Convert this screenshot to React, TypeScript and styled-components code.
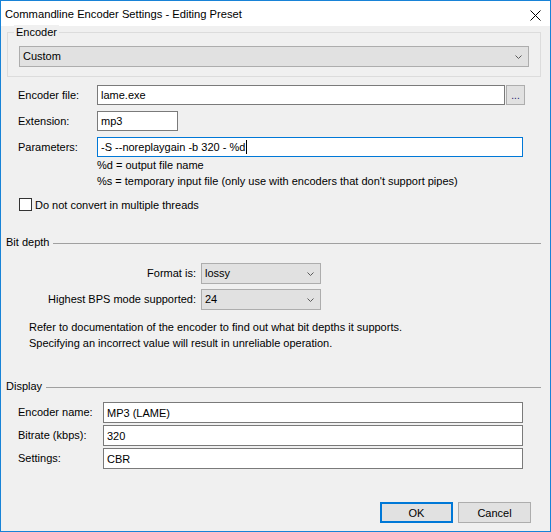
import styled, { createGlobalStyle } from 'styled-components';

const GlobalStyle = createGlobalStyle`
  html, body {
    margin: 0;
    padding: 0;
    background: #ffffff;
  }
  body {
    font-family: 'Liberation Sans', Arial, sans-serif;
    font-size: 11px;
    color: #000000;
  }
  * {
    box-sizing: border-box;
  }
`;

function Chevron() {
  return (
    <svg width='7' height='4' viewBox='0 0 7 4'>
      <polyline points='0.5,0.5 3.5,3.5 6.5,0.5' fill='none' stroke='#5a5a5a' strokeWidth='1' />
    </svg>
  );
}

function CloseGlyph() {
  return (
    <svg width='11' height='11' viewBox='0 0 11 11'>
      <line x1='0.5' y1='0.5' x2='10.5' y2='10.5' stroke='#000' strokeWidth='1' />
      <line x1='10.5' y1='0.5' x2='0.5' y2='10.5' stroke='#000' strokeWidth='1' />
    </svg>
  );
}

export default function App() {
  return (
    <>
      <GlobalStyle />
      <Window>
        <TitleBar>
          <Title>Commandline Encoder Settings - Editing Preset</Title>
          <CloseButton>
            <CloseGlyph />
          </CloseButton>
        </TitleBar>
        <Body>
          <GroupBox>
            <GroupLabel>Encoder</GroupLabel>
            <Select $width={510}>
              <span>Custom</span>
              <Chevron />
            </Select>
          </GroupBox>

          <FileGrid>
            <FieldLabel>Encoder file:</FieldLabel>
            <FieldRow>
              <TextBox $width={408}>lame.exe</TextBox>
              <BrowseButton>...</BrowseButton>
            </FieldRow>
            <FieldLabel>Extension:</FieldLabel>
            <TextBox $width={81}>mp3</TextBox>
            <FieldLabel>Parameters:</FieldLabel>
            <TextBox $width={426} $focused>
              -S --noreplaygain -b 320 - %d
              <Caret />
            </TextBox>
          </FileGrid>

          <Hint>
            <div>%d = output file name</div>
            <div>%s = temporary input file (only use with encoders that don't support pipes)</div>
          </Hint>

          <CheckRow>
            <CheckBox />
            <span>Do not convert in multiple threads</span>
          </CheckRow>

          <SectionHeader $top={24}>
            <span>Bit depth</span>
            <SectionRule />
          </SectionHeader>

          <DepthGrid>
            <DepthLabel>Format is:</DepthLabel>
            <Select $width={120}>
              <span>lossy</span>
              <Chevron />
            </Select>
            <DepthLabel>Highest BPS mode supported:</DepthLabel>
            <Select $width={120}>
              <span>24</span>
              <Chevron />
            </Select>
          </DepthGrid>

          <Note>
            <div>Refer to documentation of the encoder to find out what bit depths it supports.</div>
            <div>Specifying an incorrect value will result in unreliable operation.</div>
          </Note>

          <SectionHeader $top={28}>
            <span>Display</span>
            <SectionRule />
          </SectionHeader>

          <DisplayGrid>
            <FieldLabel>Encoder name:</FieldLabel>
            <TextBox $width={420} $height={21}>MP3 (LAME)</TextBox>
            <FieldLabel>Bitrate (kbps):</FieldLabel>
            <TextBox $width={420} $height={21}>320</TextBox>
            <FieldLabel>Settings:</FieldLabel>
            <TextBox $width={420} $height={21}>CBR</TextBox>
          </DisplayGrid>

          <ButtonBar>
            <DialogButton $primary>OK</DialogButton>
            <DialogButton>Cancel</DialogButton>
          </ButtonBar>
        </Body>
      </Window>
    </>
  );
}

const Window = styled.div`
  display: flex;
  flex-direction: column;
  width: 551px;
  height: 532px;
  border: 1px solid #1883d7;
  background-color: #f0f0f0;
  overflow: hidden;
`;

const TitleBar = styled.div`
  display: flex;
  align-items: center;
  height: 25px;
  padding-left: 4px;
  background-color: #ffffff;
`;

const Title = styled.div`
  flex: 1;
  font-size: 11.2px;
  line-height: 25px;
  padding-top: 1px;
`;

const CloseButton = styled.div`
  display: flex;
  align-items: center;
  margin-right: 9px;
  margin-top: 4px;
`;

const Body = styled.div`
  display: flex;
  flex-direction: column;
  flex: 1;
`;

const GroupBox = styled.div`
  position: relative;
  margin: 6px 9px 0 6px;
  padding: 13px 11px 9px 11px;
  border: 1px solid #dcdcdc;
`;

const GroupLabel = styled.span`
  position: absolute;
  top: -8px;
  left: 6px;
  padding: 0 2px;
  line-height: 15px;
  background-color: #f0f0f0;
`;

const Select = styled.div<{ $width: number }>`
  display: flex;
  align-items: center;
  justify-content: space-between;
  width: ${(p) => p.$width}px;
  height: 21px;
  padding: 0 6px 0 3px;
  border: 1px solid #adadad;
  background-color: #e1e1e1;
  line-height: 19px;
`;

const FileGrid = styled.div`
  display: grid;
  grid-template-columns: 79px 1fr;
  row-gap: 6px;
  align-items: center;
  margin-top: 8px;
  padding-left: 17px;
`;

const FieldLabel = styled.div`
  line-height: 15px;
`;

const FieldRow = styled.div`
  display: flex;
  gap: 1px;
`;

const TextBox = styled.div<{ $width: number; $height?: number; $focused?: boolean }>`
  display: flex;
  align-items: center;
  width: ${(p) => p.$width}px;
  height: ${(p) => p.$height ?? 20}px;
  padding: 0 3px;
  border: 1px solid ${(p) => (p.$focused ? '#0078d7' : '#7a7a7a')};
  background-color: #ffffff;
  white-space: pre;
`;

const Caret = styled.span`
  display: inline-block;
  width: 1px;
  height: 14px;
  margin-left: 1px;
  background-color: #000000;
`;

const BrowseButton = styled.div`
  display: flex;
  align-items: flex-end;
  justify-content: center;
  width: 19px;
  height: 20px;
  padding-bottom: 3px;
  border: 1px solid #adadad;
  background-color: #e1e1e1;
  font-size: 10px;
  line-height: 10px;
  color: #1a1a6a;
`;

const Hint = styled.div`
  padding-left: 96px;
  line-height: 16px;
`;

const CheckRow = styled.div`
  display: flex;
  align-items: center;
  gap: 3px;
  height: 13px;
  margin-top: 9px;
  padding-left: 18px;
`;

const CheckBox = styled.div`
  width: 13px;
  height: 13px;
  border: 1px solid #333333;
  background-color: #ffffff;
`;

const SectionHeader = styled.div<{ $top: number }>`
  display: flex;
  align-items: center;
  gap: 4px;
  margin-top: ${(p) => p.$top}px;
  padding: 0 9px 0 5px;
  line-height: 15px;
`;

const SectionRule = styled.div`
  flex: 1;
  height: 1px;
  margin-top: 1px;
  background-color: #a0a0a0;
`;

const DepthGrid = styled.div`
  display: grid;
  grid-template-columns: 195px 120px;
  column-gap: 5px;
  row-gap: 5px;
  align-items: center;
  margin-top: 13px;
`;

const DepthLabel = styled.div`
  text-align: right;
  line-height: 15px;
`;

const Note = styled.div`
  margin-top: 9px;
  padding-left: 28px;
  line-height: 16px;
`;

const DisplayGrid = styled.div`
  display: grid;
  grid-template-columns: 85px 1fr;
  row-gap: 2px;
  align-items: center;
  margin-top: 8px;
  padding-left: 17px;
`;

const ButtonBar = styled.div`
  display: flex;
  justify-content: flex-end;
  gap: 5px;
  margin-top: 33px;
  padding-right: 19px;
`;

const DialogButton = styled.div<{ $primary?: boolean }>`
  display: flex;
  align-items: center;
  justify-content: center;
  width: 73px;
  height: 21px;
  border: ${(p) => (p.$primary ? '2px solid #0078d7' : '1px solid #adadad')};
  background-color: #e1e1e1;
`;
